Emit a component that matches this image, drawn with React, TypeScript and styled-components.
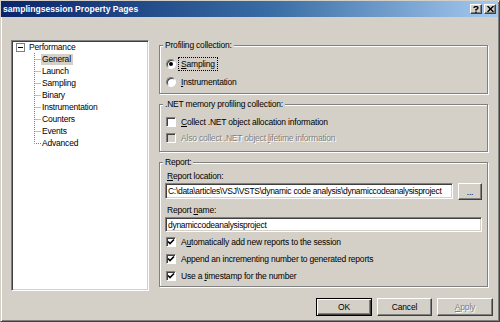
import React from "react";
import styled, { createGlobalStyle } from "styled-components";

const GlobalStyle = createGlobalStyle`
  html, body {
    margin: 0;
    padding: 0;
    background: #d4d0c8;
  }
`;

const Window = styled.div`
  width: 500px;
  height: 322px;
  box-sizing: border-box;
  background: #d4d0c8;
  border: 1px solid;
  border-color: #d4d0c8 #404040 #404040 #d4d0c8;
  box-shadow: inset 1px 1px #ffffff, inset -1px -1px #808080;
  padding: 0 1px 1px 0;
  display: flex;
  flex-direction: column;
  font-family: "Liberation Sans", Arial, sans-serif;
  font-size: 8.5px;
  letter-spacing: -0.2px;
  color: #000;
  overflow: hidden;
`;

const TitleBar = styled.div`
  height: 16px;
  display: flex;
  align-items: center;
  padding: 0 2px 0 2px;
  background: linear-gradient(to right, #0a246a 0%, #3a6ea5 55%, #a6caf0 100%);
`;

const Title = styled.div`
  flex: 1;
  color: #fff;
  font-weight: bold;
  font-size: 8.6px;
  letter-spacing: 0;
`;

const CaptionButton = styled.div<{ $gap?: number }>`
  width: 12px;
  height: 10px;
  box-sizing: border-box;
  background: #d4d0c8;
  border: 1px solid;
  border-color: #ffffff #404040 #404040 #ffffff;
  box-shadow: inset -1px -1px #808080;
  display: flex;
  align-items: center;
  justify-content: center;
  margin-left: ${(p) => p.$gap ?? 0}px;
`;

const Body = styled.div`
  display: flex;
  gap: 10px;
  padding: 23px 0 0 10px;
`;

const Tree = styled.div`
  width: 138px;
  height: 251px;
  box-sizing: border-box;
  background: #fff;
  border: 1px solid;
  border-color: #808080 #ffffff #ffffff #808080;
  box-shadow: inset 1px 1px #404040, inset -1px -1px #d4d0c8;
  padding: 0 0 0 1px;
`;

const TreeRow = styled.div`
  height: 12px;
  display: flex;
  align-items: center;
`;

const Expander = styled.div`
  width: 9px;
  height: 9px;
  box-sizing: border-box;
  border: 1px solid #808080;
  background: #fff;
  margin: 0 3px 0 3px;
  display: flex;
  align-items: center;
  justify-content: center;
  &::before {
    content: "";
    width: 5px;
    height: 1px;
    background: #000;
  }
`;

const Indent = styled.div`
  width: 21px;
  flex: none;
`;

const ItemLabel = styled.span<{ $selected?: boolean }>`
  line-height: 10px;
  padding: 0 2px 1px 1px;
  background: ${(p) => (p.$selected ? "#d4d0c8" : "transparent")};
`;

const RightCol = styled.div`
  width: 329px;
  display: flex;
  flex-direction: column;
  gap: 5px;
`;

const Group = styled.fieldset<{ $h: number }>`
  margin: 0;
  height: ${(p) => p.$h}px;
  box-sizing: border-box;
  border: 1px solid #808080;
  box-shadow: inset 1px 1px #ffffff, 1px 1px #ffffff;
  padding: 0 5px;
  min-width: 0;
`;

const Legend = styled.legend`
  padding: 0 2px;
  margin-left: -2px;
  line-height: 10px;
  background: #d4d0c8;
`;

const OptionRow = styled.label<{ $top?: number; $disabled?: boolean }>`
  height: 16px;
  display: flex;
  align-items: center;
  gap: 5px;
  padding-left: 1px;
  margin-top: ${(p) => p.$top ?? 0}px;
  color: ${(p) => (p.$disabled ? "#808080" : "#000")};
  text-shadow: ${(p) => (p.$disabled ? "1px 1px #ffffff" : "none")};
`;

const Radio = styled.span`
  width: 10px;
  height: 10px;
  box-sizing: border-box;
  border-radius: 50%;
  border: 1px solid;
  border-color: #808080 #ffffff #ffffff #808080;
  background: #fff;
  box-shadow: inset 1px 1px #404040;
  display: flex;
  align-items: center;
  justify-content: center;
  flex: none;
`;

const RadioDot = styled.span`
  width: 4px;
  height: 4px;
  border-radius: 50%;
  background: #000;
`;

const Check = styled.span<{ $disabled?: boolean }>`
  width: 10px;
  height: 10px;
  box-sizing: border-box;
  border: 1px solid;
  border-color: #808080 #ffffff #ffffff #808080;
  box-shadow: inset 1px 1px #404040;
  background: ${(p) => (p.$disabled ? "#d4d0c8" : "#fff")};
  display: flex;
  align-items: center;
  justify-content: center;
  flex: none;
`;

const Focus = styled.span`
  outline: 1px dotted #000;
  padding: 1px 2px;
  margin-left: -2px;
`;

const FieldLabel = styled.div<{ $top: number }>`
  line-height: 10px;
  margin-top: ${(p) => p.$top}px;
  padding-left: 2px;
`;

const FieldRow = styled.div`
  display: flex;
  gap: 5px;
  margin-top: 2px;
`;

const TextBox = styled.div<{ $h: number }>`
  flex: 1;
  height: ${(p) => p.$h}px;
  box-sizing: border-box;
  background: #fff;
  border: 1px solid;
  border-color: #808080 #ffffff #ffffff #808080;
  box-shadow: inset 1px 1px #404040, inset -1px -1px #d4d0c8;
  padding: 0 2px;
  display: flex;
  align-items: center;
  white-space: nowrap;
  overflow: hidden;
  letter-spacing: -0.3px;
`;

const Button = styled.div<{ $w: number; $h: number; $default?: boolean; $disabled?: boolean }>`
  width: ${(p) => p.$w}px;
  height: ${(p) => p.$h}px;
  box-sizing: border-box;
  background: #d4d0c8;
  border: 1px solid;
  border-color: ${(p) => (p.$default ? "#000" : "#ffffff #404040 #404040 #ffffff")};
  box-shadow: ${(p) =>
    p.$default
      ? "inset 1px 1px #ffffff, inset -1px -1px #404040, inset -2px -2px #808080"
      : "inset -1px -1px #808080"};
  display: flex;
  align-items: center;
  justify-content: center;
  color: ${(p) => (p.$disabled ? "#808080" : "#000")};
  text-shadow: ${(p) => (p.$disabled ? "1px 1px #ffffff" : "none")};
  flex: none;
`;

const ButtonBar = styled.div`
  display: flex;
  justify-content: flex-end;
  gap: 5px;
  padding: 7px 5px 0 0;
`;

const CheckMark = () => (
  <svg width="8" height="8" viewBox="0 0 8 8">
    <path d="M1 3.5 L3 5.5 L7 1.5" fill="none" stroke="#000" strokeWidth="1.6" />
  </svg>
);

const Connector = ({ last }: { last?: boolean }) => (
  <svg width="7" height="12" viewBox="0 0 7 12" style={{ flex: "none" }}>
    <path
      d={last ? "M0.5 0 V6.5 H7" : "M0.5 0 V12 M0.5 6.5 H7"}
      fill="none"
      stroke="#808080"
      strokeDasharray="1 1"
    />
  </svg>
);

const pages = ["General", "Launch", "Sampling", "Binary", "Instrumentation", "Counters", "Events", "Advanced"];

const Option = ({
  kind,
  checked,
  disabled,
  top,
  children,
}: {
  kind: "radio" | "check";
  checked?: boolean;
  disabled?: boolean;
  top?: number;
  children: React.ReactNode;
}) => (
  <OptionRow $top={top} $disabled={disabled}>
    {kind === "radio" ? (
      <Radio>{checked && <RadioDot />}</Radio>
    ) : (
      <Check $disabled={disabled}>{checked && <CheckMark />}</Check>
    )}
    <span>{children}</span>
  </OptionRow>
);

export default function App() {
  return (
    <>
      <GlobalStyle />
      <Window>
        <TitleBar>
          <Title>samplingsession Property Pages</Title>
          <CaptionButton>
            <svg width="6" height="7" viewBox="0 0 6 7">
              <path d="M1 2 Q1 0.5 3 0.5 Q5 0.5 5 2 Q5 3 3 3.6 V4.8" fill="none" stroke="#000" strokeWidth="1.3" />
              <rect x="2.3" y="5.6" width="1.4" height="1.4" fill="#000" />
            </svg>
          </CaptionButton>
          <CaptionButton $gap={2}>
            <svg width="7" height="6" viewBox="0 0 7 6">
              <path d="M0.5 0 L6.5 6 M6.5 0 L0.5 6" stroke="#000" strokeWidth="1.4" />
            </svg>
          </CaptionButton>
        </TitleBar>

        <Body>
          <Tree>
            <TreeRow>
              <Expander />
              <ItemLabel>Performance</ItemLabel>
            </TreeRow>
            {pages.map((p, i) => (
              <TreeRow key={p}>
                <Indent />
                <Connector last={i === pages.length - 1} />
                <ItemLabel $selected={i === 0}>{p}</ItemLabel>
              </TreeRow>
            ))}
          </Tree>

          <RightCol>
            <Group $h={54}>
              <Legend>Profiling collection:</Legend>
              <OptionRow $top={6}>
                <Radio>
                  <RadioDot />
                </Radio>
                <Focus>
                  <u>S</u>ampling
                </Focus>
              </OptionRow>
              <Option kind="radio" top={2}>
                <u>I</u>nstrumentation
              </Option>
            </Group>

            <Group $h={53}>
              <Legend>.NET memory profiling collection:</Legend>
              <Option kind="check" top={5}>
                <u>C</u>ollect .NET object allocation information
              </Option>
              <Option kind="check" disabled>
                Also collect .NET object <u>l</u>ifetime information
              </Option>
            </Group>

            <Group $h={130}>
              <Legend>Report:</Legend>
              <FieldLabel $top={4}>
                <u>R</u>eport location:
              </FieldLabel>
              <FieldRow>
                <TextBox $h={16}>C:\data\articles\VSJ\VSTS\dynamic code analysis\dynamiccodeanalysisproject</TextBox>
                <Button $w={24} $h={17}>...</Button>
              </FieldRow>
              <FieldLabel $top={5}>
                Report <u>n</u>ame:
              </FieldLabel>
              <FieldRow>
                <TextBox $h={15}>dynamiccodeanalysisproject</TextBox>
              </FieldRow>
              <Option kind="check" checked top={2}>
                A<u>u</u>tomatically add new reports to the session
              </Option>
              <Option kind="check" checked top={1}>
                Append an incrementing number to generated reports
              </Option>
              <Option kind="check" checked top={1}>
                Use a <u>t</u>imestamp for the number
              </Option>
            </Group>
          </RightCol>
        </Body>

        <ButtonBar>
          <Button $w={56} $h={18} $default>
            OK
          </Button>
          <Button $w={55} $h={18}>
            Cancel
          </Button>
          <Button $w={56} $h={18} $disabled>
            <span>
              <u>A</u>pply
            </span>
          </Button>
        </ButtonBar>
      </Window>
    </>
  );
}
